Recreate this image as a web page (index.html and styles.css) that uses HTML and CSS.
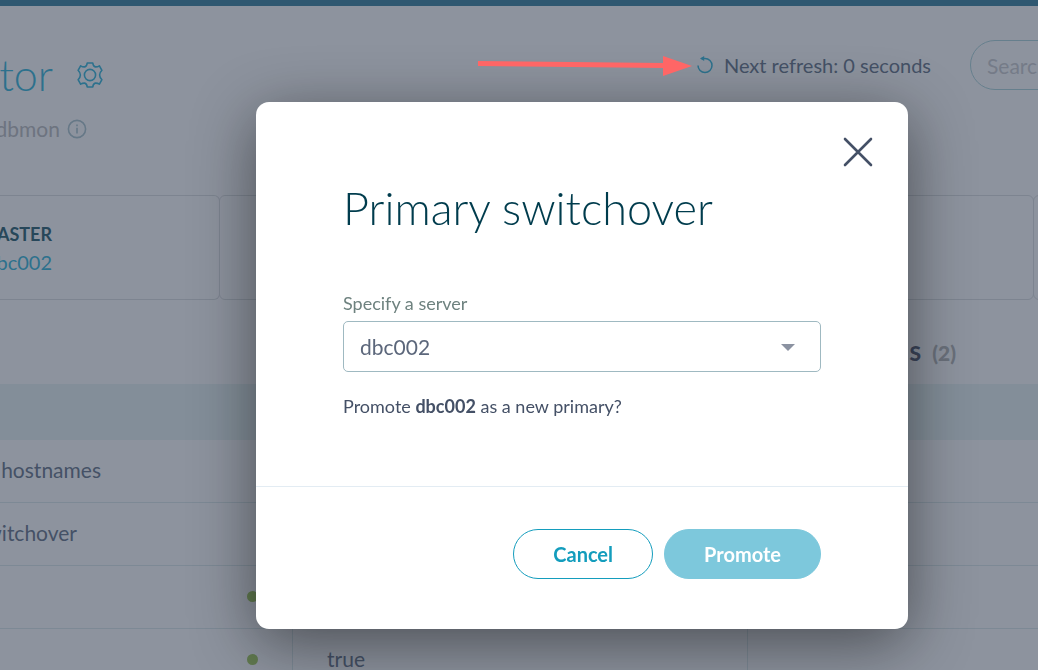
FILE: index.html
```html
<!DOCTYPE html>
<html lang="en">
<head>
  <meta charset="UTF-8" />
  <meta name="viewport" content="width=device-width, initial-scale=1.0" />
  <title>Primary switchover</title>
  <link rel="stylesheet" href="styles.css">
</head>
<body>
  <div class="page">
    <header class="page-header">
      <div class="heading">
        <div class="title-row">
          <h1>tor</h1>
          <button type="button" class="icon-button" aria-label="Settings">
            <svg width="26" height="26" viewBox="0 0 26 26" fill="none" stroke="currentColor" stroke-width="1.6" stroke-linejoin="round">
              <path d="M10.200 1h5.600q.3 3.500 2.600 3.900 2.200.1 4-1.100l2.500 4.500q-2.300 2.400-2.300 4.700t2.300 4.700l-2.500 4.500q-1.800-1.200-4-1.100-2.300.4-2.600 3.900h-5.600q-.3-3.500-2.600-3.900-2.200-.1-4 1.100l-2.500-4.500q2.300-2.400 2.300-4.700T1.100 8.300l2.500-4.500q1.800 1.200 4 1.100 2.300-.4 2.600-3.900z"/>
              <circle cx="13" cy="13" r="5.600"/>
            </svg>
          </button>
        </div>
        <div class="subtitle">
          <span>dbmon</span>
          <svg width="20" height="20" viewBox="0 0 20 20" fill="none" stroke="currentColor" stroke-width="1.6">
            <circle cx="10" cy="10" r="8.6"/>
            <path d="M10 8.8v5.6M10 5.4v1.9"/>
          </svg>
        </div>
      </div>
      <div class="refresh">
        <svg width="18" height="18" viewBox="0 0 18 18" fill="none" stroke="currentColor" stroke-width="1.5">
          <path d="M2 9.500a7 7 0 1 0 7-7H5.500"/>
          <path d="M8.2 0v5L4 2.5z" fill="currentColor" stroke="none"/>
        </svg>
        <span>Next refresh: 0 seconds</span>
      </div>
      <input type="search" class="search" placeholder="Search" aria-label="Search" />
    </header>

    <section class="cards">
      <div class="card">
        <div class="card-text">
          <strong>MASTER</strong>
          <a href="#">dbc002</a>
        </div>
      </div>
      <div class="card"></div>
      <div class="card"></div>
      <div class="card"></div>
    </section>

    <div class="tabs">
      <a href="#" class="tab">S <span>(2)</span></a>
    </div>

    <table class="settings">
      <thead>
        <tr><th></th><th></th><th></th></tr>
      </thead>
      <tbody>
        <tr><td><span class="name name-wide">hostnames</span></td><td></td><td></td></tr>
        <tr><td><span class="name">switchover</span></td><td></td><td></td></tr>
        <tr><td><i class="dot"></i></td><td>true</td><td></td></tr>
        <tr><td><i class="dot"></i></td><td>true</td><td></td></tr>
      </tbody>
    </table>
  </div>

  <div class="overlay">
    <div class="modal" role="dialog" aria-modal="true" aria-labelledby="modalTitle">
      <div class="modal-top">
        <button type="button" class="close" aria-label="Close">
          <svg width="30" height="30" viewBox="0 0 30 30" fill="none" stroke="currentColor" stroke-width="2.6" stroke-linecap="round">
            <path d="M2 2l26 26M28 2L2 28"/>
          </svg>
        </button>
      </div>
      <div class="modal-body">
        <h2 id="modalTitle">Primary switchover</h2>
        <label for="server">Specify a server</label>
        <div class="select-wrap">
          <select id="server" name="server">
            <option>dbc002</option>
          </select>
        </div>
        <p>Promote <b>dbc002</b> as a new primary?</p>
      </div>
      <div class="modal-footer">
        <button type="button" class="btn btn-outline">Cancel</button>
        <button type="button" class="btn btn-primary">Promote</button>
      </div>
    </div>
  </div>

  <svg class="arrow" width="214" height="20" viewBox="0 0 214 20" fill="#ff6666">
    <path d="M0 5l185 2V0l29 10-29 10v-8L0 10z"/>
  </svg>
</body>
</html>
```

FILE: styles.css
```css
* {
  box-sizing: border-box;
}

body {
  margin: 0;
  min-height: 100vh;
  overflow: hidden;
  background: #fff;
  color: #6e7b8e;
  font-family: Lato, "Open Sans", sans-serif;
  font-size: 20px;
  line-height: 24px;
}

a {
  color: #3ebbdc;
  text-decoration: none;
}

button {
  font-family: inherit;
  cursor: pointer;
}

/* Page behind the dialog, runs past the right edge of the window */
.page {
  width: calc(100% + 172px);
  height: 100vh;
  overflow: hidden;
  border-top: 6px solid #4289a4;
}

.page-header {
  display: flex;
  align-items: flex-start;
  padding-top: 34px;
  height: 189px;
}

.heading {
  flex: 1;
}

.title-row {
  display: flex;
  align-items: center;
  gap: 24px;
  height: 70px;
}

h1 {
  display: flex;
  justify-content: flex-end;
  width: 53px;
  margin: 0;
  color: #3ebbdc;
  font-size: 43px;
  line-height: 48px;
  font-weight: 300;
}

.icon-button {
  display: flex;
  padding: 0;
  border: none;
  background: none;
  color: #3ebbdc;
}

.subtitle {
  display: flex;
  align-items: center;
  gap: 7px;
  height: 38px;
  color: #bec0c2;
  font-size: 21px;
}

.subtitle span {
  display: flex;
  justify-content: flex-end;
  width: 60px;
}

.subtitle svg {
  color: #b0c8d0;
}

.refresh {
  display: flex;
  align-items: center;
  gap: 10px;
  height: 50px;
  margin-right: 39px;
}

.refresh svg {
  color: #3ebbdc;
}

.search {
  flex: none;
  width: 240px;
  height: 50px;
  padding: 0 16px;
  border: 1px solid #b0d7dc;
  border-radius: 25px;
  background: transparent;
  font: inherit;
  font-size: 21px;
}

.search::placeholder {
  color: #cecfd2;
}

.cards {
  display: grid;
  grid-template-columns: 220px 1fr 1fr 176px;
}

.card {
  height: 105px;
  padding-top: 26px;
  border: 1px solid #dee1e2;
  border-radius: 6px;
}

.card + .card {
  margin-left: -1px;
}

.card:first-child {
  border-left: none;
  border-radius: 0 6px 6px 0;
}

.card-text {
  display: flex;
  flex-direction: column;
  align-items: flex-end;
  gap: 4px;
  width: 52px;
}

.card-text strong {
  color: #326776;
  font-size: 18px;
}

.tabs {
  display: flex;
  justify-content: flex-end;
  align-items: center;
  height: 84px;
  padding: 22px 254px 0 0;
}

.tab {
  color: #5c657a;
  font-size: 21px;
  font-weight: 900;
}

.tab span {
  margin-left: 6px;
  color: #b8b9b8;
}

.settings {
  width: 100%;
  border-spacing: 0;
  table-layout: fixed;
  font-size: 21px;
}

.settings th {
  height: 56px;
  background: #eaf5f4;
}

.settings th:first-child {
  width: 293px;
}

.settings th:nth-child(2) {
  width: 455px;
}

.settings td {
  height: 63px;
  padding: 0 34px 2px;
  border-right: 1px solid #deebec;
  border-bottom: 1px solid #deebec;
}

.settings td:first-child {
  padding-left: 0;
}

.name {
  display: flex;
  justify-content: flex-end;
  width: 77px;
}

.name-wide {
  width: 101px;
}

.dot {
  display: block;
  width: 11px;
  height: 11px;
  margin-left: auto;
  border-radius: 50%;
  background: #a6cd62;
}

.overlay {
  position: fixed;
  inset: 0;
  display: flex;
  align-items: flex-start;
  padding: 102px 130px 41px 256px;
  background: rgba(28, 39, 62, 0.5);
}

.modal {
  flex: 1;
  border-radius: 13px;
  background: #fff;
  box-shadow: 0 14px 64px rgba(0, 0, 0, 0.48);
}

.modal-top {
  display: flex;
  justify-content: flex-end;
  padding: 35px 35px 0;
}

.close {
  display: flex;
  padding: 0;
  border: none;
  background: none;
  color: #445066;
}

.modal-body {
  padding: 14px 87px 68px;
  color: #445066;
  font-size: 18px;
}

h2 {
  margin: 0 0 56px;
  color: #003c4d;
  font-size: 45px;
  line-height: 54px;
  font-weight: 300;
}

label {
  display: block;
  margin-bottom: 6px;
  color: #6e827f;
}

.select-wrap {
  position: relative;
}

/* Dropdown caret */
.select-wrap::after {
  content: "";
  position: absolute;
  top: 23px;
  right: 26px;
  border: 7px solid transparent;
  border-top-color: #8b92a1;
  border-bottom: none;
  pointer-events: none;
}

select {
  width: 100%;
  height: 51px;
  padding: 0 16px;
  border: 1px solid #9fb9c1;
  border-radius: 5px;
  background: #fff;
  color: #5c677b;
  font: inherit;
  font-size: 21px;
  appearance: none;
}

p {
  margin: 22px 0 0;
}

.modal-footer {
  display: flex;
  justify-content: flex-end;
  gap: 11px;
  padding: 42px 87px 50px;
  border-top: 1px solid #e3ecf3;
}

.btn {
  height: 50px;
  padding: 0 39px;
  border: 1px solid #149dbd;
  border-radius: 25px;
  font-size: 20px;
  font-weight: bold;
}

.btn-outline {
  background: #fff;
  color: #149dbd;
}

.btn-primary {
  border-color: #7dc8dc;
  background: #7dc8dc;
  color: #fff;
}

/* Callout pointing at the refresh timer */
.arrow {
  position: absolute;
  top: 56px;
  left: 478px;
}
```
